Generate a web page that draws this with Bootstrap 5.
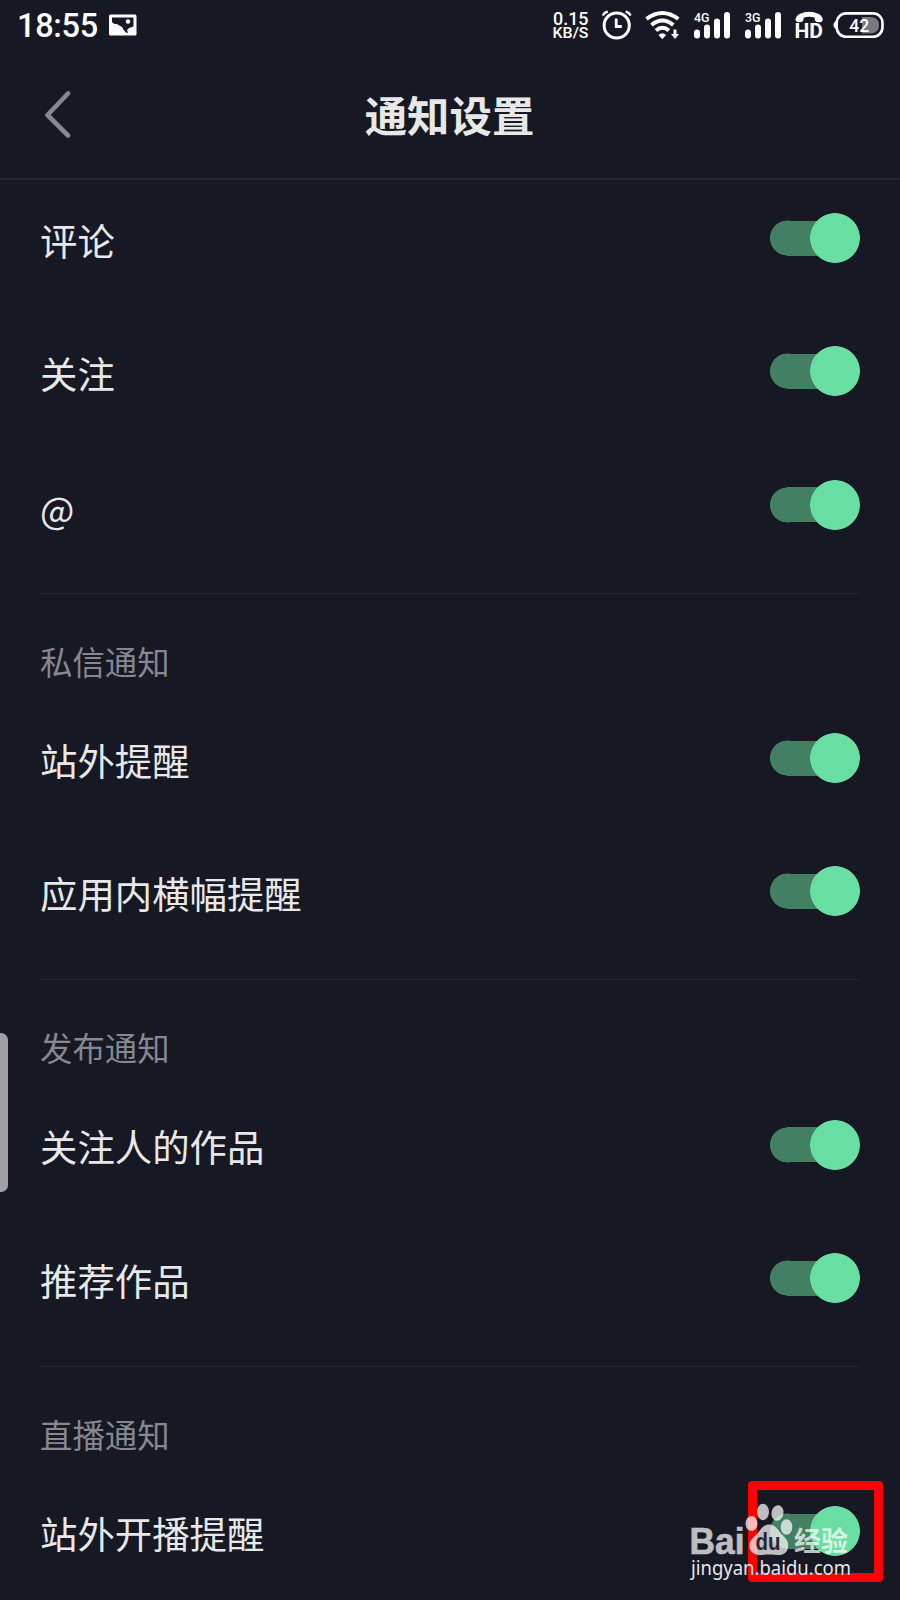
<!DOCTYPE html>
<html lang="zh-CN">
<head>
<meta charset="utf-8">
<meta name="viewport" content="width=device-width, initial-scale=1">
<title>通知设置</title>
<link href="https://cdn.jsdelivr.net/npm/bootstrap@5.3.0/dist/css/bootstrap.min.css" rel="stylesheet">
<style>
  html, body { background: #161823; }
  body { font-family: Roboto, "Noto Sans CJK SC", sans-serif; color: #e8e8e9; }
  .screen { width: 900px; height: 1600px; background: #161823; }
  .statusbar { height: 50px; padding: 0 16px 0 17px; }
  .clock { width: 81px; padding-top: 2px; font: 500 32.5px/50px Roboto, sans-serif; color: #fff; letter-spacing: -.3px; }
  .statusbar svg { display: block; fill: #fff; font-family: Roboto, sans-serif; }
  .photo { margin-left: 11px; }
  .topbar { height: 130px; padding: 0 45px 0 44px; border-bottom: 2px solid #252732; }
  .topbar h1 { font: 700 42.4px/56px "Noto Sans CJK SC", sans-serif; color: #e8e8e9; }
  .side { width: 27px; }
  .settings { margin-top: -8.5px; padding: 0 40px; }
  .setting { height: 133.33px; font: 400 37.4px/56px "Noto Sans CJK SC", sans-serif; }
  .setting span { padding-top: 3px; }
  .setting .latin { padding-top: 7px; font-size: 36.3px; }
  .group-label { height: 98.67px; margin-top: 21.33px; padding-top: 43px; border-top: 1px solid #22242f; font: 400 32.4px/48px "Noto Sans CJK SC", sans-serif; color: #868790; }
  .toggle { appearance: none; width: 90px; height: 50px; margin: 0; border: 0; background: radial-gradient(circle at 65px 25px, #68dea2 24.5px, transparent 25.2px), linear-gradient(#437f63, #437f63) 17px 7.500px / 50px 35px no-repeat, radial-gradient(circle at 17.500px 25px, #437f63 17.2px, transparent 17.8px); }
  .edge-handle { left: 0; top: 1033px; width: 8px; height: 159px; border-radius: 0 7px 7px 0; background: #a09fa5; }
  .highlight { left: 747.500px; top: 1481px; width: 135px; height: 101px; border: 9px solid #fe0000; border-radius: 4px; }
  .watermark { left: 680px; top: 1495px; }
</style>
</head>
<body>
<div class="screen position-relative overflow-hidden">
  <div class="statusbar d-flex align-items-center">
    <span class="clock text-nowrap">18:55</span>
    <svg class="photo" width="29" height="50" viewBox="109 0 29 50"><rect x="109" y="14.500" width="27.500" height="21" rx="1.500"/><path d="M112 17.500h21.500v9l-4.500 1.500-2 2 1 2.500-1.500.5c-1.500-2-3.500-3-4-5.500-1.500-2-3.500-1.500-5.500-3.500-2 .3-4-.5-5-2z" fill="#161823"/><circle cx="128" cy="21.500" r="2.200"/></svg>
    <svg class="ms-auto" width="334" height="50" viewBox="550 0 334 50">
      <g font-weight="500">
        <text x="553" y="25.300" font-size="18.500" textLength="35.500" lengthAdjust="spacingAndGlyphs">0.15</text>
        <text x="552.500" y="38.300" font-size="15.300" textLength="36" lengthAdjust="spacingAndGlyphs">KB/S</text>
        <text x="694" y="21.700" font-size="13.600" textLength="15.500" lengthAdjust="spacingAndGlyphs">4G</text>
        <text x="745" y="21.700" font-size="13.600" textLength="15.500" lengthAdjust="spacingAndGlyphs">3G</text>
        <text x="794.500" y="38.300" font-size="21" font-weight="700" textLength="28.500" lengthAdjust="spacingAndGlyphs">HD</text>
      </g>
      <g fill="none" stroke="#fff">
        <circle cx="616.700" cy="25.500" r="12.600" stroke-width="3"/>
        <path d="M616.200 18.500v8h5.600" stroke-width="2.800"/>
        <path d="M602.700 15.500q1.500-3 5-4M630.700 15.500q-1.500-3-5-4" stroke-width="2.400"/>
        <path d="M646.500 19q15.800-12 31.800 0M651.500 25q10.800-9 21.800 0M656 30.500q6.400-5.500 13 0" stroke-width="4"/>
        <path d="M675 29.500v6" stroke-width="3"/>
      </g>
      <path d="M658.500 35q3.800-3.500 7.600 0l-3.800 4.200zM671 34h8l-4 5z"/>
      <g id="bars">
        <rect x="694" y="29.500" width="6" height="9" rx="3"/><rect x="704" y="24.500" width="6" height="14" rx="3"/><rect x="714" y="18.500" width="6" height="20" rx="3"/><rect x="724" y="12" width="6" height="26.500" rx="3"/>
      </g>
      <use href="#bars" x="51"/>
      <path d="M795.500 20q0-3.500 4-6 9.800-4.500 19.300 0 4 2.500 4 6-.5 2.300-3 2.300-3.500.2-4.500-1.300-.8-1.500-.5-3.200-5.400-2.200-11.200 0 .2 1.700-.7 3.200-1 1.500-4.500 1.300-2.600-.2-2.900-2.300z"/>
      <path d="M837 20.500v9q-3.500-1.500-3.500-4.500t3.500-4.500z"/>
      <path d="M862 17h8q9 0 9 8.200t-9 8.200h-8z" fill="#787980"/>
      <rect x="836.700" y="13.400" width="45.800" height="23.400" rx="9.500" fill="none" stroke="#fff" stroke-width="2.600"/>
      <text x="859.200" y="32" font-size="19" font-weight="500" text-anchor="middle" textLength="20" lengthAdjust="spacingAndGlyphs">42</text>
    </svg>
  </div>
  <header class="topbar d-flex align-items-center justify-content-between">
    <svg class="side" width="27" height="50" viewBox="0 -1 27 50" fill="none" stroke="#868790" stroke-width="4.600" stroke-linecap="round" stroke-linejoin="round"><path d="M24 3.500L3.500 25 24 45.500"/></svg>
    <h1 class="m-0">通知设置</h1>
    <span class="side"></span>
  </header>
  <main class="settings">
    <section>
      <label class="setting d-flex align-items-center justify-content-between"><span>评论</span><input class="toggle" type="checkbox" checked></label>
      <label class="setting d-flex align-items-center justify-content-between"><span>关注</span><input class="toggle" type="checkbox" checked></label>
      <label class="setting d-flex align-items-center justify-content-between"><span class="latin">@</span><input class="toggle" type="checkbox" checked></label>
    </section>
    <section>
      <div class="group-label">私信通知</div>
      <label class="setting d-flex align-items-center justify-content-between"><span>站外提醒</span><input class="toggle" type="checkbox" checked></label>
      <label class="setting d-flex align-items-center justify-content-between"><span>应用内横幅提醒</span><input class="toggle" type="checkbox" checked></label>
    </section>
    <section>
      <div class="group-label">发布通知</div>
      <label class="setting d-flex align-items-center justify-content-between"><span>关注人的作品</span><input class="toggle" type="checkbox" checked></label>
      <label class="setting d-flex align-items-center justify-content-between"><span>推荐作品</span><input class="toggle" type="checkbox" checked></label>
    </section>
    <section>
      <div class="group-label">直播通知</div>
      <label class="setting d-flex align-items-center justify-content-between"><span>站外开播提醒</span><input class="toggle" type="checkbox" checked></label>
    </section>
  </main>
  <div class="edge-handle position-absolute"></div>
  <div class="highlight position-absolute"></div>
  <svg class="watermark position-absolute" width="190" height="95" viewBox="680 1495 190 95" fill="#fff">
    <g opacity=".72">
      <text x="689.500" y="1553.500" font-family="Liberation Sans, sans-serif" font-weight="700" font-size="36" stroke="#fff" stroke-width=".6" textLength="55" lengthAdjust="spacingAndGlyphs">Bai</text>
      <ellipse cx="751.500" cy="1523.500" rx="6" ry="7.600"/>
      <ellipse cx="763" cy="1512" rx="6" ry="8.200"/>
      <ellipse cx="777.500" cy="1513" rx="6" ry="7.800" transform="rotate(10 777.500 1513)"/>
      <ellipse cx="786.500" cy="1527" rx="5.800" ry="7.700"/>
      <path d="M769 1524.500c7 0 9 6 13 10 4 4 7 7 6 13-1 7-7 8-12 7.500-5-.6-9-.6-14 0-6 .6-12-2-12.500-8-.5-6 3-9 7-12.500 4-4 6-10 12.500-10z"/>
      <text x="794" y="1551" font-family="Noto Sans CJK SC, sans-serif" font-weight="700" font-size="27" textLength="54" lengthAdjust="spacingAndGlyphs">经验</text>
    </g>
    <text x="755.500" y="1550" font-family="Liberation Sans, sans-serif" font-weight="700" font-size="23" fill="#252733" textLength="25" lengthAdjust="spacingAndGlyphs">du</text>
    <text x="691" y="1575" font-family="Noto Sans, sans-serif" font-size="19" opacity=".9" textLength="160" lengthAdjust="spacingAndGlyphs">jingyan.baidu.com</text>
  </svg>
</div>
<script src="https://cdn.jsdelivr.net/npm/bootstrap@5.3.0/dist/js/bootstrap.bundle.min.js"></script>
</body>
</html>
